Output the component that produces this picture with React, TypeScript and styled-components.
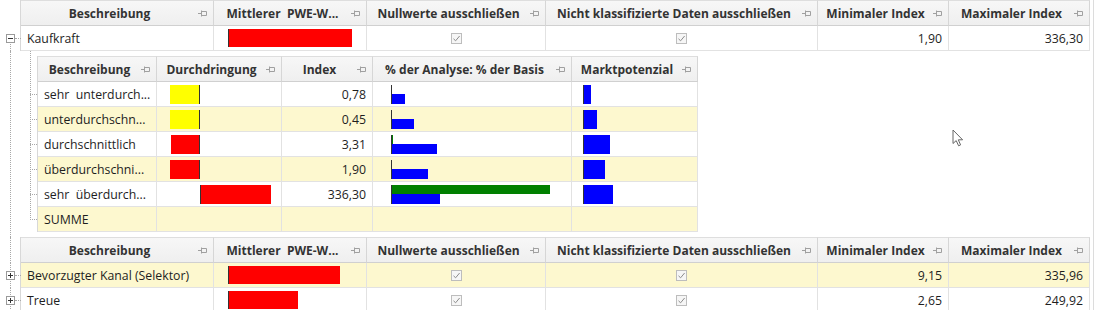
import styled, { createGlobalStyle, css } from "styled-components";

const GlobalStyle = createGlobalStyle`
  *, *::before, *::after { box-sizing: border-box; }
  html, body { margin: 0; padding: 0; background: #fff; }
  body {
    font-family: "Open Sans", "Noto Sans", sans-serif;
    font-size: 12.3px;
    color: #1e1e1e;
  }
`;

const OUTER_COLS = "193px 153px 179px 272px 131px 141px";
const NESTED_COLS = "119px 125px 91px 199px 126px";
const ALT = "#fdf8cf";
const GRID_LINE = "#e2e2e2";
const TREE_LINE = "#a8a8a8";

const Frame = styled.div`
  position: relative;
  width: 1094px;
  height: 310px;
  overflow: hidden;
  border-right: 1px solid #dcdcdc;
`;

const Line = styled.div`
  display: flex;
`;

const Gutter = styled.div<{ $line: "none" | "full" | "down" }>`
  position: relative;
  flex: none;
  width: 20px;
  display: flex;
  align-items: center;
  ${(p) =>
    p.$line !== "none" &&
    css`
      &::before {
        content: "";
        position: absolute;
        left: 10px;
        top: ${p.$line === "down" ? "50%" : "0"};
        bottom: 0;
        border-left: 1px dotted ${TREE_LINE};
      }
    `}
`;

const Expander = styled.div`
  position: relative;
  z-index: 1;
  width: 9px;
  height: 9px;
  margin-left: 6px;
  border: 1px solid #9a9a9a;
  background: #fff;
  display: flex;
  align-items: center;
  justify-content: center;
  &::after {
    content: "";
    position: absolute;
    left: 8px;
    top: 3px;
    width: 6px;
    border-top: 1px dotted ${TREE_LINE};
  }
`;

const Grid = styled.div<{ $cols: string }>`
  display: grid;
  grid-template-columns: ${(p) => p.$cols};
  border-left: 1px solid #d8d8d8;
`;

const HeaderCell = styled.div<{ $h: number }>`
  height: ${(p) => p.$h}px;
  display: flex;
  align-items: center;
  background: linear-gradient(#f7f7f7, #efefef);
  border-top: 1px solid #dedede;
  border-right: 1px solid #d6d6d6;
  border-bottom: 1px solid #d0d0d0;
  font-size: 12px;
  font-weight: 700;
  color: #333;
  white-space: pre;
`;

const HeaderLabel = styled.span`
  flex: 1;
  text-align: center;
  overflow: hidden;
  padding-left: 4px;
`;

const Pin = styled.svg`
  flex: none;
  width: 9px;
  height: 7px;
  margin: 0 6px 0 4px;
`;

const Cell = styled.div<{ $alt?: boolean; $align?: "left" | "right" | "center" }>`
  height: 25px;
  display: flex;
  align-items: center;
  justify-content: ${(p) =>
    p.$align === "right" ? "flex-end" : p.$align === "center" ? "center" : "flex-start"};
  padding: 0 6px;
  background: ${(p) => (p.$alt ? ALT : "#fff")};
  border-right: 1px solid ${GRID_LINE};
  border-bottom: 1px solid ${GRID_LINE};
  white-space: pre;
  overflow: hidden;
`;

const BarCell = styled(Cell)<{ $indent: number }>`
  padding: 0 0 0 ${(p) => p.$indent}px;
`;

const Bar = styled.div<{ $color: string; $axis?: "left" | "right" }>`
  flex: none;
  height: 19px;
  background: ${(p) => p.$color};
  ${(p) => p.$axis === "left" && css`border-left: 1px solid #333;`}
  ${(p) => p.$axis === "right" && css`border-right: 1px solid #333;`}
`;

const NegSide = styled.div`
  flex: none;
  width: 43px;
  display: flex;
  justify-content: flex-end;
`;

const Pair = styled.div`
  flex: none;
  height: 19px;
  display: flex;
  flex-direction: column;
  border-left: 1px solid #333;
`;

const HalfBar = styled.div<{ $color: string }>`
  height: 50%;
  background: ${(p) => p.$color};
`;

const Check = styled.div`
  width: 11px;
  height: 11px;
  border: 1px solid #bdbdbd;
  background: #f6f6f6;
  display: flex;
  align-items: center;
  justify-content: center;
`;

const Detail = styled.div`
  display: flex;
  padding: 5px 0;
`;

const DetailGutter = styled.div`
  position: relative;
  flex: none;
  width: 17px;
  &::before {
    content: "";
    position: absolute;
    left: 10px;
    top: -5px;
    bottom: 12px;
    border-left: 1px dotted ${TREE_LINE};
  }
`;

const NestedTable = styled.div`
  display: flex;
  flex-direction: column;
`;

const NestedRow = styled(Grid)`
  position: relative;
  &::before {
    content: "";
    position: absolute;
    left: -8px;
    top: 12px;
    width: 7px;
    border-top: 1px dotted ${TREE_LINE};
  }
`;

const Cursor = styled.svg`
  position: absolute;
  left: 952px;
  top: 129px;
  width: 13px;
  height: 18px;
`;

const PinIcon = () => (
  <Pin viewBox="0 0 9 7">
    <path d="M0 3.5H3M3.5 0.5V6.5M3.5 1.5H8.5V5.5H3.5" stroke="#a0a0a0" strokeWidth="1" fill="none" />
  </Pin>
);

const CheckBox = () => (
  <Check>
    <svg width="9" height="9" viewBox="0 0 9 9">
      <path d="M1.5 4.8L3.6 6.8L7.6 2" stroke="#8c8c8c" strokeWidth="1" fill="none" />
    </svg>
  </Check>
);

const outerHeaders = [
  "Beschreibung",
  "Mittlerer  PWE-W...",
  "Nullwerte ausschließen",
  "Nicht klassifizierte Daten ausschließen",
  "Minimaler Index",
  "Maximaler Index",
];

const nestedHeaders = [
  "Beschreibung",
  "Durchdringung",
  "Index",
  "% der Analyse: % der Basis",
  "Marktpotenzial",
];

type Cls = {
  name: string;
  neg: number;
  pos: number;
  color: string;
  index: string;
  green: number;
  blue: number;
  market: number;
};

const classes: Cls[] = [
  { name: "sehr  unterdurch...", neg: 30, pos: 0, color: "#ffff00", index: "0,78", green: 0, blue: 13, market: 8 },
  { name: "unterdurchschn...", neg: 30, pos: 0, color: "#ffff00", index: "0,45", green: 0, blue: 22, market: 14 },
  { name: "durchschnittlich", neg: 29, pos: 0, color: "#ff0000", index: "3,31", green: 1, blue: 45, market: 27 },
  { name: "überdurchschni...", neg: 30, pos: 0, color: "#ff0000", index: "1,90", green: 0, blue: 36, market: 22 },
  { name: "sehr  überdurch...", neg: 0, pos: 71, color: "#ff0000", index: "336,30", green: 158, blue: 48, market: 30 },
];

type Entry = { name: string; bar: number; min: string; max: string };

const entries: Entry[] = [
  { name: "Bevorzugter Kanal (Selektor)", bar: 112, min: "9,15", max: "335,96" },
  { name: "Treue", bar: 70, min: "2,65", max: "249,92" },
];

const OuterHeader = ({ line }: { line: "none" | "full" }) => (
  <Line>
    <Gutter $line={line} />
    <Grid $cols={OUTER_COLS}>
      {outerHeaders.map((h) => (
        <HeaderCell key={h} $h={26}>
          <HeaderLabel>{h}</HeaderLabel>
          <PinIcon />
        </HeaderCell>
      ))}
    </Grid>
  </Line>
);

const OuterRow = ({
  name,
  bar,
  min,
  max,
  alt,
  sign,
  line,
}: Entry & { alt?: boolean; sign: "-" | "+"; line: "full" | "down" }) => (
  <Line>
    <Gutter $line={line}>
      <Expander>
        <svg width="7" height="7" viewBox="0 0 7 7">
          <path d={sign === "-" ? "M1 3.5H6" : "M1 3.5H6M3.5 1V6"} stroke="#333" strokeWidth="1" />
        </svg>
      </Expander>
    </Gutter>
    <Grid $cols={OUTER_COLS}>
      <Cell $alt={alt}>{name}</Cell>
      <BarCell $alt={alt} $indent={14}>
        <Bar $color="#ff0000" $axis="left" style={{ width: bar, height: 18 }} />
      </BarCell>
      <Cell $alt={alt} $align="center">
        <CheckBox />
      </Cell>
      <Cell $alt={alt} $align="center">
        <CheckBox />
      </Cell>
      <Cell $alt={alt} $align="right">{min}</Cell>
      <Cell $alt={alt} $align="right">{max}</Cell>
    </Grid>
  </Line>
);

const ClassRow = ({ c, alt }: { c: Cls; alt: boolean }) => (
  <NestedRow $cols={NESTED_COLS}>
    <Cell $alt={alt}>{c.name}</Cell>
    <BarCell $alt={alt} $indent={0}>
      <NegSide>
        {c.neg > 0 && <Bar $color={c.color} $axis="right" style={{ width: c.neg }} />}
      </NegSide>
      {c.pos > 0 && <Bar $color={c.color} $axis="left" style={{ width: c.pos }} />}
    </BarCell>
    <Cell $alt={alt} $align="right">{c.index}</Cell>
    <BarCell $alt={alt} $indent={18}>
      <Pair>
        <HalfBar $color="#008000" style={{ width: c.green }} />
        <HalfBar $color="#0000ff" style={{ width: c.blue }} />
      </Pair>
    </BarCell>
    <BarCell $alt={alt} $indent={11}>
      <Bar $color="#0000ff" $axis="left" style={{ width: c.market }} />
    </BarCell>
  </NestedRow>
);

export default function App() {
  return (
    <Frame>
      <GlobalStyle />
      <OuterHeader line="none" />
      <OuterRow name="Kaufkraft" bar={124} min="1,90" max="336,30" sign="-" line="down" />
      <Line>
        <Gutter $line="full" />
        <Detail>
          <DetailGutter />
          <NestedTable>
            <Grid $cols={NESTED_COLS}>
              {nestedHeaders.map((h) => (
                <HeaderCell key={h} $h={26}>
                  <HeaderLabel>{h}</HeaderLabel>
                  <PinIcon />
                </HeaderCell>
              ))}
            </Grid>
            {classes.map((c, i) => (
              <ClassRow key={c.name} c={c} alt={i % 2 === 1} />
            ))}
            <NestedRow $cols={NESTED_COLS}>
              <Cell $alt>SUMME</Cell>
              <Cell $alt />
              <Cell $alt />
              <Cell $alt />
              <Cell $alt />
            </NestedRow>
          </NestedTable>
        </Detail>
      </Line>
      <OuterHeader line="full" />
      {entries.map((e, i) => (
        <OuterRow key={e.name} {...e} alt={i === 0} sign="+" line="full" />
      ))}
      <Cursor viewBox="0 0 13 18">
        <path d="M1 1V14.5L4.2 11.6L6.6 16.8L8.6 15.9L6.3 10.8H10.6Z" fill="#fff" stroke="#666" strokeWidth="1" />
      </Cursor>
    </Frame>
  );
}
